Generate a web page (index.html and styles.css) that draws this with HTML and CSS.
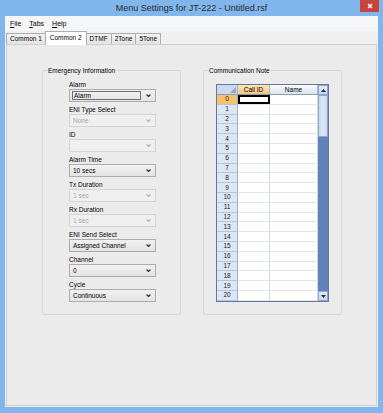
FILE: index.html
```html
<!DOCTYPE html>
<html lang="en">

<head>
    <meta charset="UTF-8">
    <title>Menu Settings for JT-222 - Untitled.rsf</title>
    <link rel="stylesheet" href="styles.css">
</head>

<body>

    <div class="window">
        <div class="titlebar">
            <span></span>
            <span class="title">Menu Settings for JT-222 - Untitled.rsf</span>
            <span class="close">
                <svg width="6" height="6" viewBox="0 0 6 6">
                    <path d="M1 1 L5 5 M5 1 L1 5" stroke="#fff" stroke-width="1.4" />
                </svg>
            </span>
        </div>

        <div class="client">
            <div class="menubar">
                <span><u>F</u>ile</span>
                <span><u>T</u>abs</span>
                <span><u>H</u>elp</span>
            </div>

            <div class="tabs">
                <span class="tab">Common 1</span>
                <span class="tab selected">Common 2</span>
                <span class="tab">DTMF</span>
                <span class="tab">2Tone</span>
                <span class="tab">5Tone</span>
            </div>

            <div class="page">
                <fieldset class="group">
                    <legend>Emergency Information</legend>
                    <div class="fields">
                        <div class="field">
                            <label>Alarm</label>
                            <div class="combo focus"><span class="value">Alarm</span><svg class="arrow" viewBox="0 0 5 3"><path d="M0.5 0.5 L2.5 2.5 L4.5 0.5" /></svg></div>
                        </div>
                        <div class="field">
                            <label>ENI Type Select</label>
                            <div class="combo disabled"><span class="value">None</span><svg class="arrow" viewBox="0 0 5 3"><path d="M0.5 0.5 L2.5 2.5 L4.5 0.5" /></svg></div>
                        </div>
                        <div class="field">
                            <label>ID</label>
                            <div class="combo disabled"><span class="value"></span><svg class="arrow" viewBox="0 0 5 3"><path d="M0.5 0.5 L2.5 2.5 L4.5 0.5" /></svg></div>
                        </div>
                        <div class="field">
                            <label>Alarm Time</label>
                            <div class="combo"><span class="value">10 secs</span><svg class="arrow" viewBox="0 0 5 3"><path d="M0.5 0.5 L2.5 2.5 L4.5 0.5" /></svg></div>
                        </div>
                        <div class="field">
                            <label>Tx Duration</label>
                            <div class="combo disabled"><span class="value">1 sec</span><svg class="arrow" viewBox="0 0 5 3"><path d="M0.5 0.5 L2.5 2.5 L4.5 0.5" /></svg></div>
                        </div>
                        <div class="field">
                            <label>Rx Duration</label>
                            <div class="combo disabled"><span class="value">1 sec</span><svg class="arrow" viewBox="0 0 5 3"><path d="M0.5 0.5 L2.5 2.5 L4.5 0.5" /></svg></div>
                        </div>
                        <div class="field">
                            <label>ENI Send Select</label>
                            <div class="combo"><span class="value">Assigned Channel</span><svg class="arrow" viewBox="0 0 5 3"><path d="M0.5 0.5 L2.5 2.5 L4.5 0.5" /></svg></div>
                        </div>
                        <div class="field">
                            <label>Channel</label>
                            <div class="combo"><span class="value">0</span><svg class="arrow" viewBox="0 0 5 3"><path d="M0.5 0.5 L2.5 2.5 L4.5 0.5" /></svg></div>
                        </div>
                        <div class="field">
                            <label>Cycle</label>
                            <div class="combo"><span class="value">Continuous</span><svg class="arrow" viewBox="0 0 5 3"><path d="M0.5 0.5 L2.5 2.5 L4.5 0.5" /></svg></div>
                        </div>
                    </div>
                </fieldset>

                <fieldset class="group">
                    <legend>Communication Note</legend>
                    <div class="grid">
                        <table class="cells">
                            <thead>
                                <tr>
                                    <th class="corner"><svg width="6" height="6" viewBox="0 0 6 6"><path d="M6 0 L6 6 L0 6 Z" fill="#8ea6c8" /></svg></th>
                                    <th class="current">Call ID</th>
                                    <th>Name</th>
                                </tr>
                            </thead>
                            <tbody>
                                <tr><th class="current">0</th><td class="active"></td><td></td></tr>
                                <tr><th>1</th><td></td><td></td></tr>
                                <tr><th>2</th><td></td><td></td></tr>
                                <tr><th>3</th><td></td><td></td></tr>
                                <tr><th>4</th><td></td><td></td></tr>
                                <tr><th>5</th><td></td><td></td></tr>
                                <tr><th>6</th><td></td><td></td></tr>
                                <tr><th>7</th><td></td><td></td></tr>
                                <tr><th>8</th><td></td><td></td></tr>
                                <tr><th>9</th><td></td><td></td></tr>
                                <tr><th>10</th><td></td><td></td></tr>
                                <tr><th>11</th><td></td><td></td></tr>
                                <tr><th>12</th><td></td><td></td></tr>
                                <tr><th>13</th><td></td><td></td></tr>
                                <tr><th>14</th><td></td><td></td></tr>
                                <tr><th>15</th><td></td><td></td></tr>
                                <tr><th>16</th><td></td><td></td></tr>
                                <tr><th>17</th><td></td><td></td></tr>
                                <tr><th>18</th><td></td><td></td></tr>
                                <tr><th>19</th><td></td><td></td></tr>
                                <tr><th>20</th><td></td><td></td></tr>
                            </tbody>
                        </table>
                        <div class="vscroll">
                            <div class="sbtn"><svg width="5" height="3" viewBox="0 0 5 3"><path d="M2.5 0 L5 3 L0 3 Z" /></svg></div>
                            <div class="thumb"></div>
                            <div class="track"></div>
                            <div class="sbtn"><svg width="5" height="3" viewBox="0 0 5 3"><path d="M0 0 L5 0 L2.5 3 Z" /></svg></div>
                        </div>
                    </div>
                </fieldset>
            </div>
        </div>
    </div>

</body>

</html>
```

FILE: styles.css
```css
body {
    font-family: "Liberation Sans", Arial, sans-serif;
    font-size: 6.5px;
    color: #000;
    margin: 0;
    padding: 0;
}

.window {
    width: 383px;
    height: 413px;
    box-sizing: border-box;
    padding: 0 5px 6px;
    background-color: #80b6ec;
    display: flex;
    flex-direction: column;
}

/* title bar */
.titlebar {
    height: 16px;
    display: grid;
    grid-template-columns: 1fr auto 1fr;
}

.title {
    font-size: 9px;
    line-height: 16px;
    color: #2b2b2b;
}

.close {
    justify-self: end;
    width: 19px;
    height: 12px;
    margin-right: -1px;
    background-color: #c8433b;
    display: flex;
    align-items: center;
    justify-content: center;
}

.client {
    flex: 1;
    background-color: #f0f0f0;
    display: flex;
    flex-direction: column;
}

/* menu */
.menubar {
    height: 15px;
    padding-left: 5px;
    background-color: #f5f6f7;
    display: flex;
    align-items: center;
    gap: 8px;
    font-size: 7px;
}

/* tabs */
.tabs {
    height: 13px;
    padding-left: 1px;
    display: flex;
    align-items: flex-end;
}

.tab {
    height: 11px;
    box-sizing: border-box;
    padding: 0 3px;
    margin-right: -1px;
    border: 1px solid #adadad;
    border-bottom: none;
    background: linear-gradient(#f2f2f2, #e3e3e3);
    line-height: 10px;
}

.tab.selected {
    height: 14px;
    margin-bottom: -1px;
    padding: 0 4px;
    background: #fff;
    position: relative;
    line-height: 12px;
}

/* tab page */
.page {
    flex: 1;
    margin: 0 1px 1px 1px;
    padding: 21px 0 0 35px;
    border: 1px solid #cfcfcf;
    background-color: #ebebeb;
    display: flex;
    align-items: flex-start;
    gap: 22px;
}

.group {
    width: 139px;
    height: 249px;
    box-sizing: border-box;
    margin: 0;
    padding: 0 0 0 4px;
    border: 1px solid #d6d6d6;
    border-radius: 2px;
}

.group legend {
    padding: 0 1px;
    line-height: 9px;
}

.fields {
    width: 87px;
    margin: 5px 0 0 22px;
}

.field {
    margin-bottom: 3px;
}

.field label {
    display: block;
    line-height: 9px;
}

.combo {
    height: 13px;
    box-sizing: border-box;
    padding: 0 4px 0 3px;
    border: 1px solid #acacac;
    background: linear-gradient(#f1f1f1, #e3e3e3);
    display: flex;
    align-items: center;
    justify-content: space-between;
}

.combo .value {
    line-height: 9px;
}

.combo .arrow {
    width: 5px;
    height: 3px;
    fill: none;
    stroke: #333;
    stroke-width: 1.2;
}

.combo.focus {
    padding-left: 2px;
}

.combo.focus .value {
    flex: 1;
    height: 9px;
    margin-right: 5px;
    padding-left: 1px;
    border: 1px solid #707070;
    box-sizing: border-box;
    line-height: 7px;
}

.combo.disabled {
    border-color: #d4d4d4;
    background: #efefef;
    color: #a5a5a5;
}

.combo.disabled .arrow {
    stroke: #b5b5b5;
}

/* data grid */
.grid {
    width: 113px;
    height: 218px;
    box-sizing: border-box;
    margin: 9px 0 0 8px;
    border: 1px solid #65779a;
    display: flex;
}

.cells {
    width: 101px;
    height: 216px;
    border-collapse: collapse;
    table-layout: fixed;
    background-color: #fff;
}

.cells th,
.cells td {
    padding: 0;
    line-height: 8px;
    font-weight: normal;
    text-align: center;
}

.cells td {
    border-right: 1px solid #d3d8e0;
    border-bottom: 1px solid #e2e5ea;
}

.cells thead th {
    height: 9px;
    background: linear-gradient(#fafbfc, #dbe3ee);
    border-right: 1px solid #a3b2c6;
    border-bottom: 1px solid #8c9cb3;
}

.cells thead th:nth-child(1) {
    width: 20px;
}

.cells thead th:nth-child(2) {
    width: 31px;
}

.cells thead th.corner {
    background: #c9d9ef;
    text-align: right;
    vertical-align: bottom;
}

.cells thead th.corner svg {
    display: block;
    margin: 0 1px 1px auto;
}

.cells thead th.current {
    background: linear-gradient(#fce6b8, #f4c57a);
}

.cells tbody th {
    background-color: #dce6f4;
    border-right: 1px solid #9cb1cc;
    border-bottom: 1px solid #b5c6dc;
    color: #1a1a1a;
}

.cells tbody th.current {
    background-color: #f6c06c;
}

.cells td.active {
    outline: 2px solid #000;
    outline-offset: -2px;
}

.vscroll {
    width: 10px;
    display: flex;
    flex-direction: column;
    background-color: #5f83b8;
}

.sbtn {
    height: 10px;
    box-sizing: border-box;
    border: 1px solid #8ea6c9;
    background: linear-gradient(#e4ecf7, #c5d5ec);
    display: flex;
    align-items: center;
    justify-content: center;
}

.sbtn svg {
    fill: #1e2e48;
}

.thumb {
    height: 42px;
    box-sizing: border-box;
    border: 1px solid #8ea6c9;
    background: linear-gradient(90deg, #c8d8ef, #dde8f6, #c8d8ef);
}

.track {
    flex: 1;
}
```
